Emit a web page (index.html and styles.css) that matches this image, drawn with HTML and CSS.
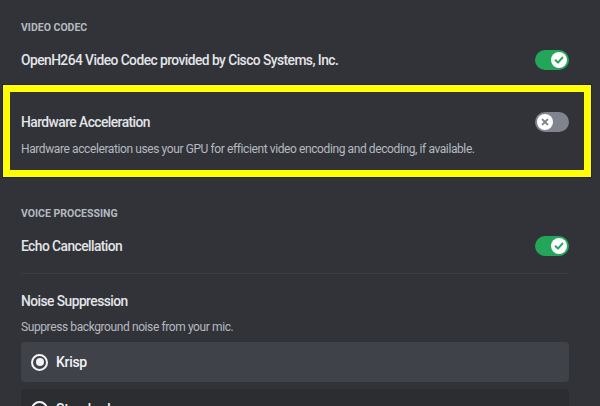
FILE: index.html
```html
<!DOCTYPE html>
<html>
<head>
<meta charset="utf-8">
<link rel="stylesheet" href="styles.css">
</head>
<body>
<div class="page">
  <section class="group">
    <h2 class="group-title">Video Codec</h2>
    <div class="row">
      <span class="label">OpenH264 Video Codec provided by Cisco Systems, Inc.</span>
      <span class="toggle on"><span class="knob"><svg viewBox="0 0 16 16" width="16" height="16"><path d="M4.6 8.3 L7 10.6 L11.4 5.6" fill="none" stroke="#23a55a" stroke-width="2" stroke-linecap="round" stroke-linejoin="round"/></svg></span></span>
    </div>
  </section>

  <section class="highlight">
    <div class="row">
      <span class="label">Hardware Acceleration</span>
      <span class="toggle off"><span class="knob"><svg viewBox="0 0 16 16" width="16" height="16"><path d="M5.6 5.6 L10.4 10.4 M10.4 5.6 L5.6 10.4" fill="none" stroke="#80848e" stroke-width="2" stroke-linecap="round"/></svg></span></span>
    </div>
    <p class="desc">Hardware acceleration uses your GPU for efficient video encoding and decoding, if available.</p>
  </section>

  <section class="group voice">
    <h2 class="group-title">Voice Processing</h2>
    <div class="row">
      <span class="label">Echo Cancellation</span>
      <span class="toggle on"><span class="knob"><svg viewBox="0 0 16 16" width="16" height="16"><path d="M4.6 8.3 L7 10.6 L11.4 5.6" fill="none" stroke="#23a55a" stroke-width="2" stroke-linecap="round" stroke-linejoin="round"/></svg></span></span>
    </div>
    <div class="divider"></div>
    <div class="label noise-title">Noise Suppression</div>
    <p class="desc noise-desc">Suppress background noise from your mic.</p>
    <div class="options">
      <div class="option selected"><span class="radio"></span><span class="opt-label">Krisp</span></div>
      <div class="option"><span class="radio"></span><span class="opt-label">Standard</span></div>
    </div>
  </section>
</div>
</body>
</html>
```

FILE: styles.css
```css
* { box-sizing: border-box; }
html, body { margin: 0; padding: 0; }
body {
  background: #313338;
  font-family: Roboto, "Noto Sans", sans-serif;
  width: 600px;
  height: 406px;
  overflow: hidden;
}
.page { padding-top: 21px; }
.group { padding: 0 31px 0 21px; }
.group-title {
  margin: 0;
  font-size: 10.5px;
  line-height: 14px;
  font-weight: 700;
  text-transform: uppercase;
  color: #b5bac1;
  letter-spacing: 0;
}
.row {
  display: flex;
  align-items: center;
  justify-content: space-between;
  height: 20px;
  margin-top: 15px;
}
.label {
  font-size: 13.8px;
  line-height: 20px;
  font-weight: 500;
  color: #e3e5e8;
  letter-spacing: -0.55px;
}
.toggle {
  width: 34px;
  height: 20px;
  border-radius: 10px;
  display: flex;
  align-items: center;
  padding: 0 2px;
}
.toggle.on { background: #23a55a; justify-content: flex-end; }
.toggle.off { background: #80848e; justify-content: flex-start; }
.knob {
  width: 16px;
  height: 16px;
  border-radius: 50%;
  background: #fff;
  display: flex;
}
.highlight {
  margin: 15px 9px 0 3px;
  border: 7px solid #ffff00;
  box-shadow: 0 0 0 1px #23243a;
  padding: 0 15px 13px 11px;
}
.highlight .row { margin-top: 20px; }
.desc {
  margin: 9px 0 0;
  font-size: 12px;
  line-height: 16px;
  color: #b5bac1;
  letter-spacing: -0.4px;
}
.voice { margin-top: 30px; }
.divider {
  height: 1px;
  background: #3b3d44;
  margin-top: 17px;
}
.noise-title { margin-top: 17px; }
.noise-desc { margin-top: 8px; }
.options { margin-top: 7px; display: flex; flex-direction: column; gap: 7px; }
.option {
  height: 40px;
  border-radius: 4px;
  background: #2b2d31;
  display: flex;
  align-items: center;
  padding-left: 10px;
}
.option.selected { background: #404249; }
.radio {
  width: 17px;
  height: 17px;
  border-radius: 50%;
  border: 2px solid #f2f3f5;
  display: flex;
  align-items: center;
  justify-content: center;
}
.option.selected .radio::after {
  content: "";
  width: 8px;
  height: 8px;
  border-radius: 50%;
  background: #f2f3f5;
}
.opt-label {
  margin-left: 8px;
  font-size: 14px;
  font-weight: 500;
  color: #f2f3f5;
  letter-spacing: -0.3px;
}
```
